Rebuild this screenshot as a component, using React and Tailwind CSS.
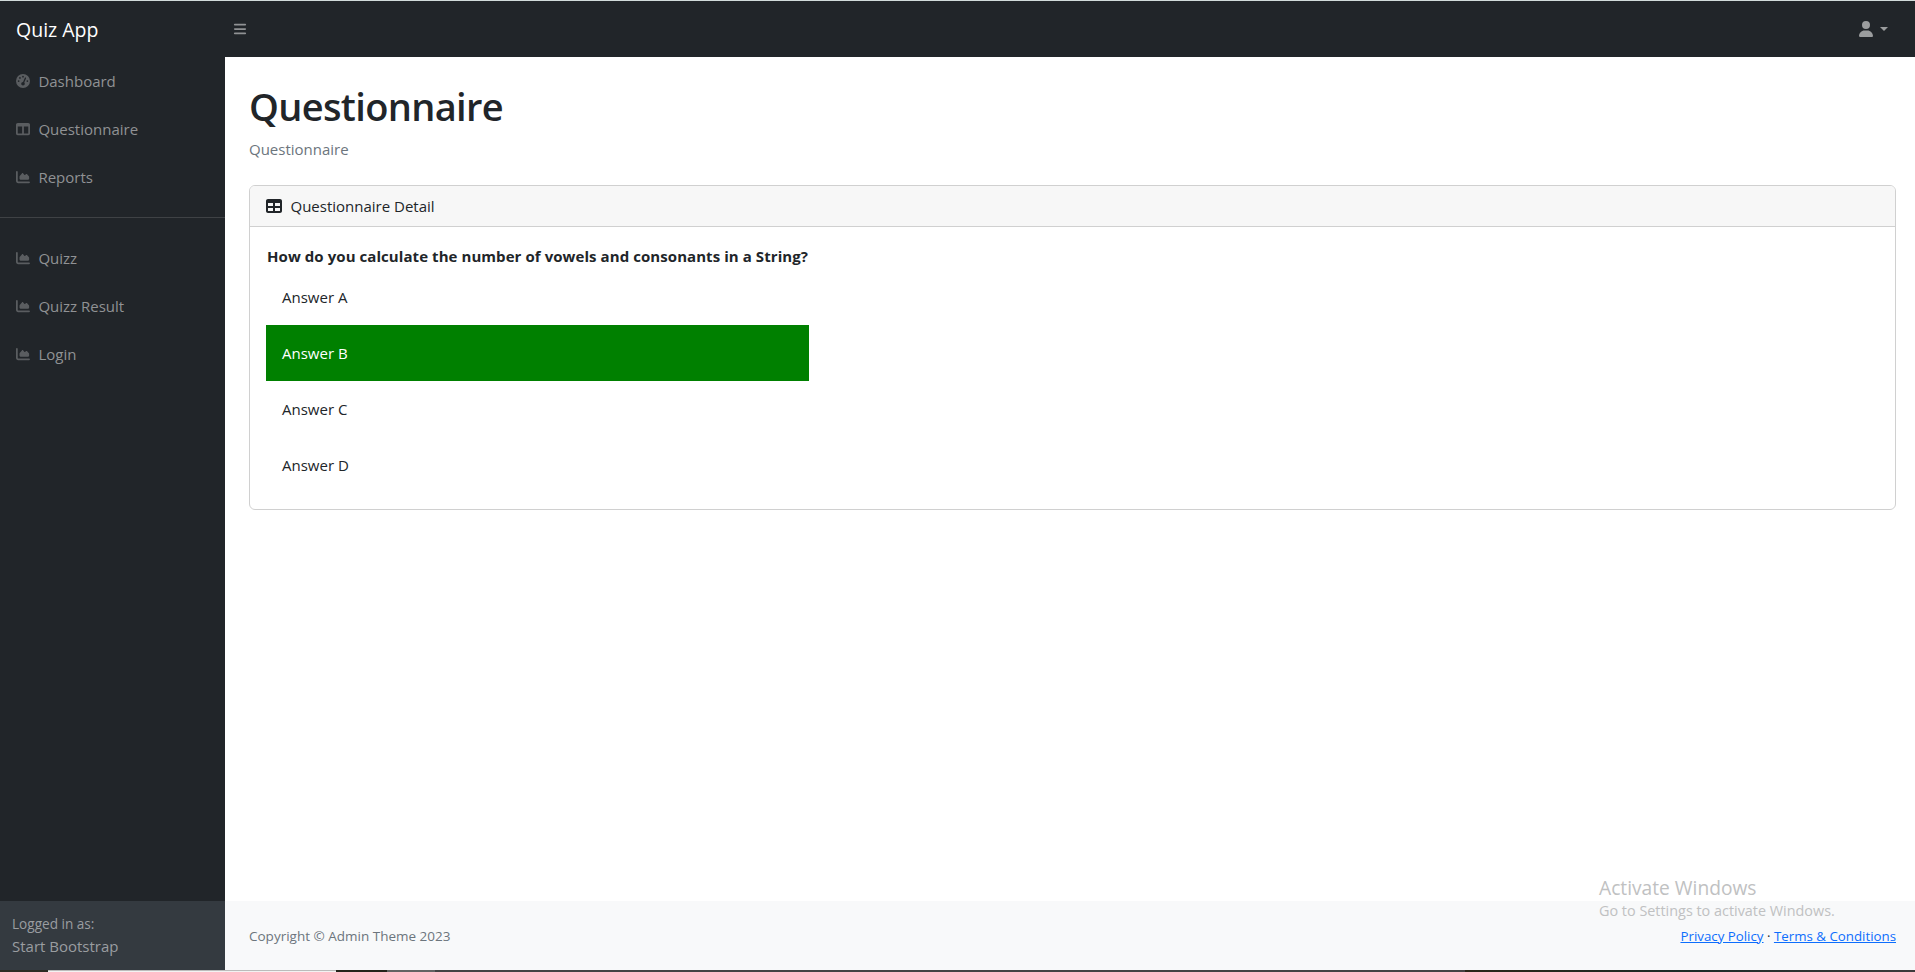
import { FaGaugeHigh, FaTableColumns, FaChartArea, FaTable, FaBars, FaUser } from "react-icons/fa6";

function NavItem({ icon: Icon, label }) {
  return (
    <a className="flex h-12 items-center px-4 text-[#909294]">
      <Icon className="mr-[8.4px] size-3.5 text-[#5a5d60]" />
      <span>{label}</span>
    </a>
  );
}

function Answer({ children, correct }) {
  return (
    <li className={correct ? "flex h-14 items-center bg-[#008000] px-4 text-white" : "flex h-14 items-center px-4"}>
      {children}
    </li>
  );
}

export default function App() {
  return (
    <div className="flex h-[972px] w-full flex-col bg-white font-['Open_Sans',sans-serif] text-[15px] leading-6 text-[#212529]">
      <div className="h-px bg-[#d2dbda]" />
      <header className="flex h-14 items-center bg-[#212529]">
        <div className="w-[225px] pt-0.5 pl-4 text-[19.5px] text-white">Quiz App</div>
        <FaBars className="ml-2 size-3.5 text-[#909294]" />
        <div className="ml-auto mr-[27px] flex items-center text-[#9b9d9e]">
          <FaUser className="size-4" />
          <span className="ml-1.5 border-x-4 border-t-4 border-x-transparent border-t-[#9b9d9e]" />
        </div>
      </header>
      <div className="flex min-h-0 flex-1">
        <aside className="flex w-[225px] shrink-0 flex-col bg-[#212529]">
          <nav className="flex-1">
            <NavItem icon={FaGaugeHigh} label="Dashboard" />
            <NavItem icon={FaTableColumns} label="Questionnaire" />
            <NavItem icon={FaChartArea} label="Reports" />
            <hr className="my-4 border-[#3f4245]" />
            <NavItem icon={FaChartArea} label="Quizz" />
            <NavItem icon={FaChartArea} label="Quizz Result" />
            <NavItem icon={FaChartArea} label="Login" />
          </nav>
          <div className="h-[69px] bg-[#343a40] p-3 text-[#9a9da0]">
            <div className="text-[13.6px] leading-[22px]">Logged in as:</div>
            <div className="leading-[22px]">Start Bootstrap</div>
          </div>
        </aside>
        <div className="flex min-w-0 flex-1 flex-col">
          <main className="flex-1 pr-[19px] pl-6">
            <h1 className="pt-[25px] text-[38px] leading-[48px] font-semibold tracking-[-0.65px]">Questionnaire</h1>
            <div className="mt-[7px] mb-6 text-[#6c757d]">Questionnaire</div>
            <section className="overflow-hidden rounded-md border border-[#d0d0d0]">
              <div className="flex h-[41px] items-center border-b border-[#d0d0d0] bg-[#f7f7f7] px-4">
                <FaTable className="mr-[8.5px] size-4" />
                <span>Questionnaire Detail</span>
              </div>
              <div className="p-4">
                <div className="w-[543px]">
                  <p className="pl-px leading-[26px] font-bold tracking-[0.07px] whitespace-nowrap">
                    How do you calculate the number of vowels and consonants in a String?
                  </p>
                  <ul>
                    <Answer>Answer A</Answer>
                    <Answer correct>Answer B</Answer>
                    <Answer>Answer C</Answer>
                    <Answer>Answer D</Answer>
                  </ul>
                </div>
              </div>
            </section>
          </main>
          <footer className="relative flex h-[69px] items-center justify-between bg-[#f8f9fa] pr-[19px] pl-6 text-[13.5px] text-[#6c757d]">
            <span>Copyright © Admin Theme 2023</span>
            <span className="text-[13.3px] text-[#212529]">
              <a className="text-[#0d6efd] underline">Privacy Policy</a> · <a className="text-[#0d6efd] underline">Terms &amp; Conditions</a>
            </span>
            <div className="absolute -top-[25px] left-[1374px] whitespace-nowrap text-[#c0c1c2]">
              <div className="text-[19.2px] leading-6">Activate Windows</div>
              <div className="text-[14.4px] leading-[22px]">Go to Settings to activate Windows.</div>
            </div>
          </footer>
        </div>
      </div>
      <div className="flex h-0.5 bg-[#444444]">
        <div className="w-12 bg-[#2c2b24]" />
        <div className="w-72 border-t border-[#bbbbbb] bg-[#f2f2f2]" />
        <div className="w-[51px] bg-[#25241c]" />
        <div className="w-12 bg-[#636363]" />
        <div className="w-[1030px] bg-[#444344]" />
        <div className="flex-1 bg-linear-to-r from-[#2a2618] via-[#1c2b27] to-[#3c3b3c]" />
      </div>
    </div>
  );
}
